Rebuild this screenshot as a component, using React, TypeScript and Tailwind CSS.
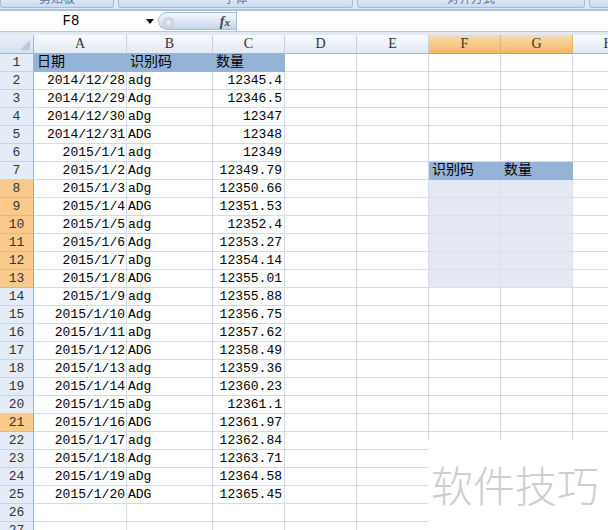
import React from 'react'

const rows: [string, string, string][] = [
  ['2014/12/28', 'adg', '12345.4'],
  ['2014/12/29', 'Adg', '12346.5'],
  ['2014/12/30', 'aDg', '12347'],
  ['2014/12/31', 'ADG', '12348'],
  ['2015/1/1', 'adg', '12349'],
  ['2015/1/2', 'Adg', '12349.79'],
  ['2015/1/3', 'aDg', '12350.66'],
  ['2015/1/4', 'ADG', '12351.53'],
  ['2015/1/5', 'adg', '12352.4'],
  ['2015/1/6', 'Adg', '12353.27'],
  ['2015/1/7', 'aDg', '12354.14'],
  ['2015/1/8', 'ADG', '12355.01'],
  ['2015/1/9', 'adg', '12355.88'],
  ['2015/1/10', 'Adg', '12356.75'],
  ['2015/1/11', 'aDg', '12357.62'],
  ['2015/1/12', 'ADG', '12358.49'],
  ['2015/1/13', 'adg', '12359.36'],
  ['2015/1/14', 'Adg', '12360.23'],
  ['2015/1/15', 'aDg', '12361.1'],
  ['2015/1/16', 'ADG', '12361.97'],
  ['2015/1/17', 'adg', '12362.84'],
  ['2015/1/18', 'Adg', '12363.71'],
  ['2015/1/19', 'aDg', '12364.58'],
  ['2015/1/20', 'ADG', '12365.45'],
]

const widths = ['w-[93px]', 'w-[86px]', 'w-[72px]', 'w-[72px]', 'w-[72px]', 'w-[72px]', 'w-[72px]', 'w-[72px]']
const letters = ['A', 'B', 'C', 'D', 'E', 'F', 'G', 'H']

const grid = 'h-[18px] shrink-0 border-r border-b border-[#d4dbe7] leading-[17px] whitespace-nowrap overflow-hidden'
const headFill = 'h-[18px] shrink-0 border-r border-b border-[#95b3d7] bg-[#95b3d7] leading-[17px] text-[14px] pl-[3px] whitespace-nowrap'
const selFill = 'h-[18px] shrink-0 border-r border-b border-[#d9dfeb] bg-[#e5e9f3]'

function RowHead({ n }: { n: number }) {
  const sel = (n >= 8 && n <= 13) || n === 21
  return (
    <div
      className={
        sel
          ? 'h-[18px] w-[34px] shrink-0 border-r border-b border-r-[#e59b45] border-b-[#eab67a] bg-[#f9ca8c] text-center leading-[17px] text-[#333]'
          : 'h-[18px] w-[34px] shrink-0 border-r border-b border-r-[#9eb6ce] border-b-[#c5d3e4] bg-[#e4ecf7] text-center leading-[17px] text-[#333]'
      }
    >
      {n}
    </div>
  )
}

function Row({ n }: { n: number }) {
  const d = rows[n - 2]
  return (
    <div className="flex">
      <RowHead n={n} />
      {widths.map((w, i) => {
        if (n === 1 && i < 3) {
          return (
            <div key={i} className={`${headFill} ${w}`}>
              {['日期', '识别码', '数量'][i]}
            </div>
          )
        }
        if (n === 7 && (i === 5 || i === 6)) {
          return (
            <div key={i} className={`${headFill} ${w}`}>
              {i === 5 ? '识别码' : '数量'}
            </div>
          )
        }
        if (n >= 8 && n <= 13 && (i === 5 || i === 6)) {
          return <div key={i} className={`${selFill} ${w}`} />
        }
        let text = ''
        let align = ''
        if (d && i === 0) {
          text = d[0]
          align = 'text-right pr-[1px]'
        }
        if (d && i === 1) {
          text = d[1]
          align = 'pl-[1px]'
        }
        if (d && i === 2) {
          text = d[2]
          align = 'text-right pr-[2px]'
        }
        return (
          <div key={i} className={`${grid} ${w} ${align}`}>
            {text}
          </div>
        )
      })}
    </div>
  )
}

function RibbonButton({ w, label }: { w: string; label: string }) {
  return (
    <div className={`${w} h-[8px] shrink-0 overflow-hidden rounded-b-[3px] border border-t-0 border-[#a3bcd9] bg-linear-to-b from-[#dce7f5] to-[#cbdaee] flex justify-center`}>
      <span className="-mt-[9px] text-[12px] leading-[14px] text-[#5c77a3] font-['Noto_Sans_CJK_SC',sans-serif]">{label}</span>
    </div>
  )
}

export default function App() {
  return (
    <div className="relative h-[530px] w-[608px] overflow-hidden bg-white text-[13px] text-black font-['Liberation_Mono','Noto_Sans_CJK_SC',monospace]">
      {/* ribbon fragment */}
      <div className="flex h-[9px] gap-[4px] bg-[#dfe8f5]">
        <RibbonButton w="w-[114px]" label="剪贴板" />
        <RibbonButton w="w-[235px]" label="字体" />
        <RibbonButton w="w-[228px]" label="对齐方式" />
        <RibbonButton w="w-[40px]" label="" />
      </div>
      <div className="h-[2px] bg-[#a9c2df]" />

      {/* formula bar */}
      <div className="flex h-[21px] border-b border-[#b6c7dc] bg-white">
        <div className="flex w-[158px] shrink-0 items-center">
          <div className="w-[142px] text-center text-[14px] leading-[20px]">F8</div>
          <svg width="8" height="5" viewBox="0 0 8 5" className="ml-[4px]">
            <path d="M0 0h8L4 5z" fill="#111" />
          </svg>
        </div>
        <div className="relative my-[1px] flex w-[78px] shrink-0 items-center justify-end rounded-l-full border border-r-0 border-[#a9bdd6] bg-linear-to-b from-[#f4f7fb] via-[#dfe8f3] to-[#c3d3e8] pr-[6px]">
          <div className="absolute left-[4px] top-[4px] h-[11px] w-[11px] rounded-full bg-radial from-[#f2f2f2] to-[#b4bcc6]" />
          <span className="font-['Liberation_Serif',serif] text-[14px] font-bold italic text-[#444]">
            f<span className="text-[11px]">x</span>
          </span>
        </div>
        <div className="flex-1 border-l border-[#a9bdd6]" />
      </div>
      <div className="h-[3px] bg-[#e2e9f3]" />

      {/* column header */}
      <div className="flex">
        <div className="relative h-[19px] w-[34px] shrink-0 border-r border-b border-r-[#9eb6ce] border-b-[#9eb6ce] bg-linear-to-b from-[#e9eff8] to-[#d6e1ef]">
          <svg width="10" height="10" viewBox="0 0 10 10" className="absolute bottom-[3px] right-[3px]">
            <path d="M10 0v10H0z" fill="#b9c9dc" />
          </svg>
        </div>
        {widths.map((w, i) => {
          const sel = i === 5 || i === 6
          return (
            <div
              key={i}
              className={
                sel
                  ? `${w} h-[19px] shrink-0 border-r border-b border-r-[#e5b371] border-b-[#f0953a] bg-linear-to-b from-[#f9dcad] to-[#f4b862] text-center leading-[18px] text-[#333] font-['Liberation_Serif',serif] text-[14px]`
                  : `${w} h-[19px] shrink-0 border-r border-b border-r-[#c5d1df] border-b-[#9eb6ce] bg-linear-to-b from-[#f8fafd] to-[#e3e9f2] text-center leading-[18px] text-[#333] font-['Liberation_Serif',serif] text-[14px]`
              }
            >
              {letters[i]}
            </div>
          )
        })}
      </div>

      {/* sheet rows */}
      {Array.from({ length: 27 }, (_, k) => (
        <Row key={k} n={k + 1} />
      ))}

      {/* watermark */}
      <div className="absolute left-[428px] top-[440px] right-0 bottom-0 flex items-center bg-white pl-[3px] pb-[2px]">
        <span className="font-['Noto_Sans_CJK_SC',sans-serif] text-[42px] font-light leading-none text-[#cdcdcd]">软件技巧</span>
      </div>
    </div>
  )
}
